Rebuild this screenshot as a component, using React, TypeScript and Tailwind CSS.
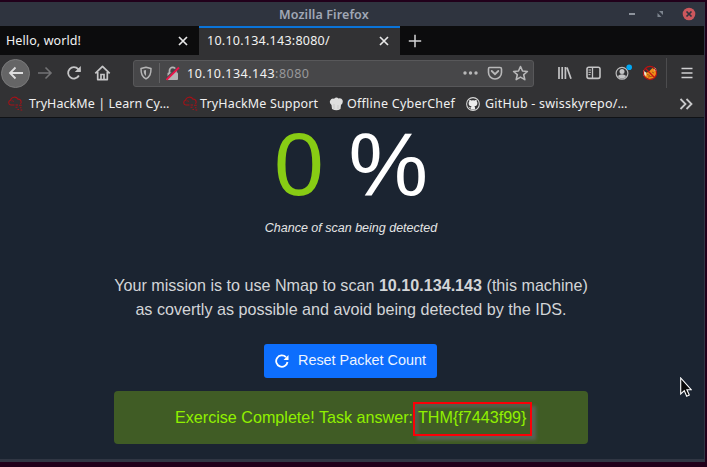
import React from "react";

const ui = "font-['Noto_Sans','Open_Sans',sans-serif]";

function CloseX() {
  return (
    <svg width="10" height="10" viewBox="0 0 10 10" stroke="#e8e8e8" strokeWidth="1.7">
      <path d="M1 1l8 8M9 1l-8 8" />
    </svg>
  );
}

function Cloud() {
  return (
    <svg width="17" height="16" viewBox="0 0 17 16" fill="none" stroke="#a51218" strokeWidth="1.1">
      <path d="M7.500 9H3.800a2.400 2.400 0 0 1-.3-4.700A4 3.800 0 0 1 11 3.200 2.800 2.800 0 0 1 13.500 7.800" />
      <path d="M4.500 5q1.500-.6 2.500.6" strokeWidth=".8" />
      <path d="M8.500 9h2.500M12 9.200h2.800M8.500 11.300h2M13 11.800h1.500M10.500 13.500h1.500M13.500 14h1.800" />
    </svg>
  );
}

function TitleBar() {
  return (
    <div className="relative flex h-6 items-center justify-end bg-[#2f343f] pr-[8px]">
      <span className="absolute left-[279px] top-[4px] whitespace-nowrap text-[12.500px] font-semibold leading-[18px] tracking-[0.1px] text-[#a0a7b5]">
        Mozilla Firefox
      </span>
      <svg width="68" height="14" viewBox="0 0 68 14">
        <path d="M1 7h6" stroke="#aeb3bd" strokeWidth="1.500" />
        <path d="M31 4h4v4zM29.500 6v4h4z" fill="#7e858f" />
        <circle cx="61" cy="7" r="6.300" fill="#cc575d" />
        <path d="M58.500 4.500l5 5M63.500 4.500l-5 5" stroke="#2f343f" strokeWidth="1.700" />
      </svg>
    </div>
  );
}

function TabBar() {
  return (
    <div className="flex h-[29px] bg-[#0c0c0d] text-[12.500px] leading-[18px] text-[#f2f2f2]">
      <div className="flex w-[199px] items-center justify-between pl-[6px] pr-[11px]">
        <span className="whitespace-nowrap tracking-[0.1px]">Hello, world!</span>
        <CloseX />
      </div>
      <div className="flex w-[201px] items-center justify-between border-t-2 border-[#0a74da] bg-[#323234] pl-[8px] pr-[11px]">
        <span className="-mt-[2px] whitespace-nowrap tracking-[0.25px]">10.10.134.143:8080/</span>
        <span className="-mt-[2px]"><CloseX /></span>
      </div>
      <svg className="ml-2 mt-2" width="14" height="14" viewBox="0 0 14 14" stroke="#d4d4d5" strokeWidth="1.500">
        <path d="M7 .800v12.400M.800 7h12.400" />
      </svg>
    </div>
  );
}

function Toolbar() {
  return (
    <div className="flex h-9 items-center bg-[#323234]">
      <div className="ml-[1px] flex h-[29px] w-[29px] items-center justify-center rounded-full border border-[#7a7a7b] bg-[#656566]">
        <svg width="16" height="16" viewBox="0 0 16 16" fill="none" stroke="#dededf" strokeWidth="1.800">
          <path d="M15 8H2M7.500 2.500L2 8l5.500 5.500" />
        </svg>
      </div>
      <svg className="ml-[7px]" width="16" height="16" viewBox="0 0 16 16" fill="none" stroke="#737375" strokeWidth="1.600">
        <path d="M1 8h13M8.500 2.500L14 8l-5.500 5.500" />
      </svg>
      <svg className="ml-[13px]" width="16" height="16" viewBox="0 0 16 16" fill="none" stroke="#c6c6c7" strokeWidth="1.800">
        <path d="M12.900 10.500A5.700 5.700 0 1 1 12.200 4.200L14 6" />
        <path d="M14.800 1v6h-6z" fill="#c6c6c7" stroke="none" />
      </svg>
      <svg className="ml-[12px]" width="17" height="16" viewBox="0 0 17 16" fill="none" stroke="#c6c6c7" strokeWidth="1.700">
        <path d="M1.300 8.300L8.500 1.300l7.200 7M3.700 7v7.600h9.600V7" strokeLinejoin="round" />
        <path d="M7 14V9.500h3V14" />
      </svg>
      <div className="ml-[22px] flex h-[27px] w-[401px] items-center rounded-[3px] border border-[#58585a] bg-[#474749]">
        <svg className="ml-[5px]" width="14" height="14" viewBox="0 0 14 14" fill="none" stroke="#b4b4b5" strokeWidth="1.500">
          <path d="M7 1.200l5 1.300c0 5.500-1 8-5 10.300C3 10.500 2 8 2 2.500z" strokeLinejoin="round" />
          <path d="M7 4v6c-1.500-1-2.200-2.500-2.300-5.400z" fill="#b4b4b5" stroke="none" />
        </svg>
        <div className="ml-[6px] h-5 w-px bg-[#626264]" />
        <svg className="ml-[6px]" width="14" height="15" viewBox="0 0 14 15">
          <path d="M3.500 7V4.500a3.200 3.200 0 0 1 6.400 0V7" fill="none" stroke="#b4b4b5" strokeWidth="1.700" />
          <rect x="1.500" y="6.500" width="10.500" height="7.500" rx="1" fill="#b4b4b5" />
          <path d="M.500 12L12 1" stroke="#474749" strokeWidth="1.500" />
          <path d="M.500 13.800L13 1.500" stroke="#e9154a" strokeWidth="1.900" />
        </svg>
        <span className="ml-[7px] mt-[1px] w-[270px] whitespace-nowrap text-[12.500px] leading-[18px] tracking-[0.5px] text-[#f2f2f2]">
          10.10.134.143<span className="text-[#98989a]">:8080</span>
        </span>
        <svg className="ml-[4px]" width="72" height="16" viewBox="0 0 72 16" fill="none" stroke="#b8b8b9" strokeWidth="1.600">
          <g fill="#b8b8b9" stroke="none">
            <circle cx="4" cy="8" r="1.700" />
            <circle cx="9.500" cy="8" r="1.700" />
            <circle cx="15" cy="8" r="1.700" />
          </g>
          <path d="M28.500 2.500h10.500q1.500 0 1.500 1.500v3.500a6.500 6.500 0 0 1-13 0V4q0-1.500 1-1.500z" />
          <path d="M30.700 6l3.300 3.200L37.300 6" strokeWidth="1.800" strokeLinecap="round" />
          <path d="M59.500 1.500l2 4.500 4.900.500-3.700 3.200 1.100 4.900-4.300-2.500-4.300 2.500 1.100-4.900-3.700-3.200L57.500 6z" strokeLinejoin="round" />
        </svg>
      </div>
      <svg className="ml-[23px]" width="15" height="14" viewBox="0 0 15 14" fill="none" stroke="#c4c4c5" strokeWidth="1.700">
        <path d="M2 1v12M5.200 1v12M8.400 1v12M10 1.500l4 11.300" />
      </svg>
      <svg className="ml-[14px]" width="15" height="14" viewBox="0 0 15 14" fill="none" stroke="#c4c4c5" strokeWidth="1.600">
        <rect x="1" y="1.200" width="13" height="11.200" rx="1.800" />
        <path d="M6.500 1v12" strokeWidth="1.300" />
        <path d="M2.500 4h2.500M2.500 6.300h2.500M2.500 8.600h2" strokeWidth="1" />
      </svg>
      <svg className="ml-[13px]" width="19" height="18" viewBox="0 0 19 18">
        <circle cx="8" cy="9.300" r="5.900" fill="none" stroke="#bababb" strokeWidth="1.200" />
        <circle cx="8" cy="7.500" r="2.500" fill="#c4c4c5" />
        <path d="M3.800 12q4.200-3.500 8.400 0-1.500 2.500-4.200 2.500T3.800 12z" fill="#c4c4c5" />
        <circle cx="15.200" cy="3.200" r="2.800" fill="#00a8f5" />
      </svg>
      <svg className="ml-[9px]" width="16" height="16" viewBox="0 0 16 16">
        <path d="M2.500 8l4-1 4-4 3.500 3 .3 4-3 3.500-4.300.5-4-2z" fill="#ef8d18" />
        <path d="M1 5l3 2.500.500 3-3 .5zM11.500 2l2.500 1.500.5 3-2-1z" fill="#eee5c7" />
        <path d="M5 9.500l3 1M10 7l2 1M6 12l5-1" stroke="#a55a18" strokeWidth="1" />
        <circle cx="8" cy="8" r="6.600" fill="none" stroke="#b91212" strokeWidth="1.200" />
        <path d="M3.500 3.500l9 9" stroke="#c91212" strokeWidth="1.300" />
      </svg>
      <div className="ml-[8px] h-[30px] w-px bg-[#4c4c4e]" />
      <svg className="ml-[14px]" width="12" height="14" viewBox="0 0 12 14" stroke="#d0d0d1" strokeWidth="1.600">
        <path d="M.500 2.500h11M.500 7h11M.500 11.500h11" />
      </svg>
    </div>
  );
}

function Bookmarks() {
  return (
    <div className="flex h-[26px] items-center bg-[#323234] text-[12.500px] leading-[18px] text-[#f0f0f0]">
      <div className="flex w-[175px] items-center gap-[5px] whitespace-nowrap pl-[7px]">
        <Cloud />
        <span className="tracking-[0.07px]">TryHackMe | Learn Cy…</span>
      </div>
      <div className="flex w-[154px] items-center gap-[1px] whitespace-nowrap pl-[7px]">
        <Cloud />
        <span className="tracking-[0.15px]">TryHackMe Support</span>
      </div>
      <div className="flex w-[136px] items-center gap-[3px] whitespace-nowrap">
        <svg width="15" height="14" viewBox="0 0 15 14">
          <path d="M3 12L2.500 8Q0 6 1.200 3.500 2.500 1 5 1.800 7.500-.5 9.500 1.500q3-.7 4 1.500 1 3-1.500 5l-.5 4q-4 2.500-8.500 0z" fill="#dedede" />
          <path d="M5 7v5M9 8v4" stroke="#bbb" strokeWidth=".6" />
        </svg>
        <span className="tracking-[0.24px]">Offline CyberChef</span>
      </div>
      <div className="flex w-[212px] items-center gap-[5px] whitespace-nowrap pl-[1px]">
        <svg width="14" height="14" viewBox="0 0 16 16" fill="#ececec">
          <circle cx="8" cy="8" r="7.300" fill="none" stroke="#d8d8d8" strokeWidth="1.200" />
          <path d="M5.500 14.300v-2l.8-1.700C4 10.400 3 9.400 3 7.100c0-.9.300-1.600.8-2.200-.1-.5-.2-1.200.1-1.800.8 0 1.500.5 2.100.9a7 7 0 0 1 4 0c.5-.4 1.300-.9 2.100-.9.200.6.200 1.300.1 1.800.5.600.8 1.300.8 2.200 0 2.300-1.300 3.300-3.300 3.500l.7 1.700v2.100z" />
          <path d="M5.500 12.500q-1.300.3-2-1.200" fill="none" stroke="#ececec" />
        </svg>
        <span className="tracking-[0.22px]">GitHub - swisskyrepo/…</span>
      </div>
      <svg className="ml-[2px]" width="14" height="12" viewBox="0 0 14 12" fill="none" stroke="#c9c9ca" strokeWidth="1.800">
        <path d="M1.500 1l5 5-5 5M7.500 1l5 5-5 5" />
      </svg>
    </div>
  );
}

function Page() {
  return (
    <main className="flex h-[342px] flex-col items-center border-t border-[#101216] bg-[#1b2431] pr-[2px] font-['Liberation_Sans',Arial,sans-serif]">
      <div className="h-[101px] whitespace-pre text-[89.500px] leading-[92px] text-white">
        <span className="text-[#88cc14]">0</span> %
      </div>
      <p className="whitespace-nowrap text-[12.500px] italic leading-[18px] text-[#e4e4e5]">Chance of scan being detected</p>
      <div className="mt-[36px] whitespace-nowrap text-center text-[16.140px] leading-6 text-[#d3d5d8]">
        Your mission is to use Nmap to scan <b>10.10.134.143</b> (this machine)
        <br />
        as covertly as possible and avoid being detected by the IDS.
      </div>
      <button className="mr-px mt-[23px] flex h-[34px] w-[173px] shrink-0 items-center whitespace-nowrap rounded-[3px] bg-[#0d6efd] pl-[11px] text-[14.400px] text-[#eef4ff]">
        <svg width="14" height="14" viewBox="0 0 14 14" fill="none" stroke="white" strokeWidth="1.800">
          <path d="M12.500 8A5.700 5.700 0 1 1 11 3.200" />
          <path d="M13.500 1v5h-5z" fill="white" stroke="none" />
        </svg>
        <span className="ml-[9px]">Reset Packet Count</span>
      </button>
      <div className="mt-[13px] flex h-[53px] w-[474px] shrink-0 items-center rounded-[4px] bg-[#405c25] pl-[61px] text-[16.140px] text-[#90f000]">
        <span className="w-[238px] whitespace-nowrap">Exercise Complete! Task answer:</span>
        <div className="mt-[3px] flex h-[34px] w-[119px] items-center whitespace-nowrap border-2 border-[#fb0007] pb-[3px] pl-[3px] shadow-[4px_4px_3px_rgba(100,100,110,0.65),inset_4px_4px_3px_rgba(100,100,110,0.5)]">
          THM{"{f7443f99}"}
        </div>
      </div>
    </main>
  );
}

export default function App() {
  return (
    <div className={`relative h-[467px] w-[707px] overflow-hidden bg-[#21001a] pt-[2px] ${ui}`}>
      <div className="w-[705px] border-b-[3px] border-r border-[#303643]">
        <TitleBar />
        <TabBar />
        <Toolbar />
        <Bookmarks />
        <Page />
      </div>
      <svg className="absolute left-[680px] top-[377px]" width="12" height="20" viewBox="0 0 12 20">
        <path d="M.700 1v16l3.600-3.300 2.400 5.500 2.600-1.200-2.400-5.200h4.500z" fill="#080808" stroke="#fff" strokeWidth="1.100" />
      </svg>
    </div>
  );
}
